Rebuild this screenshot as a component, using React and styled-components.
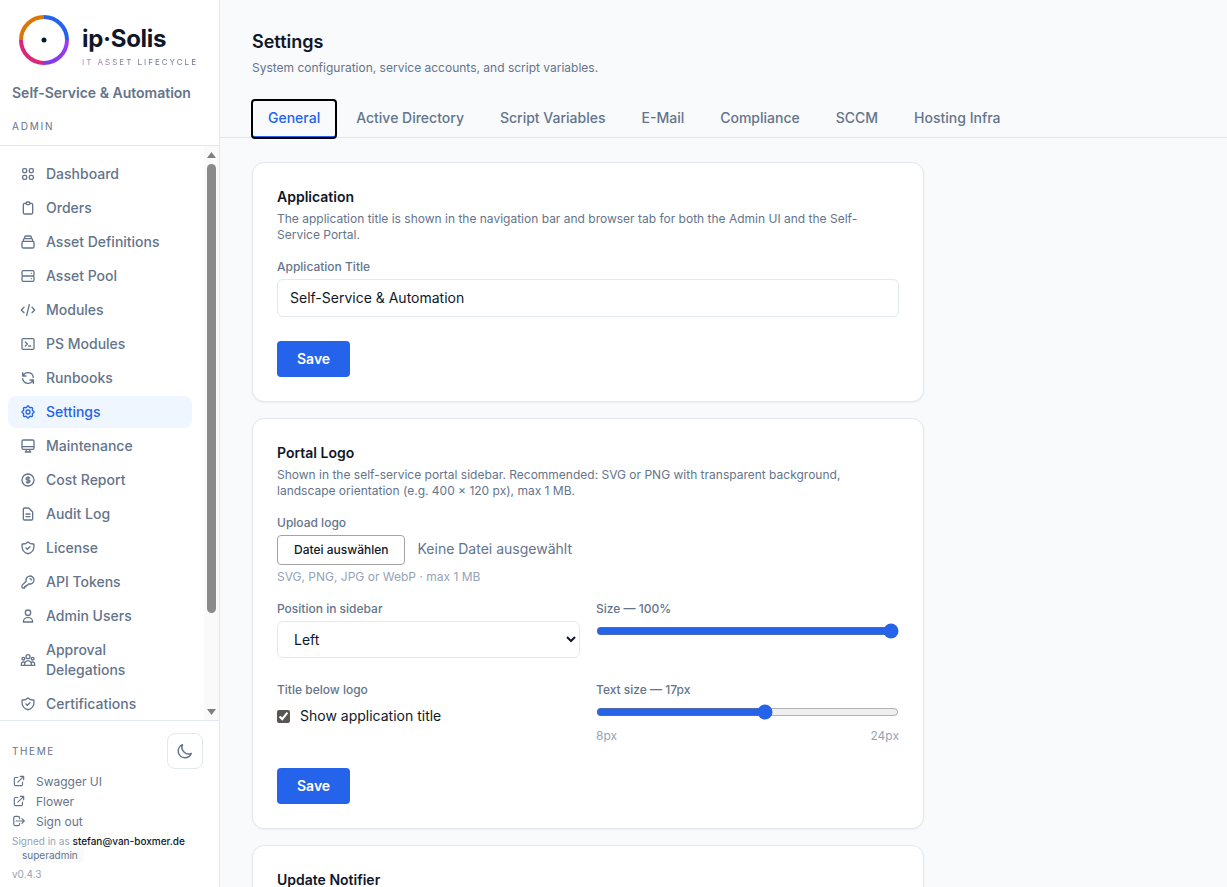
import React from 'react';
import styled, {createGlobalStyle} from 'styled-components';
import {
	HiOutlineViewGrid,
	HiOutlineClipboard,
	HiOutlineCollection,
	HiOutlineServer,
	HiOutlineCode,
	HiOutlineTerminal,
	HiOutlineRefresh,
	HiOutlineCog,
	HiOutlineDesktopComputer,
	HiOutlineCurrencyDollar,
	HiOutlineDocumentText,
	HiOutlineShieldCheck,
	HiOutlineKey,
	HiOutlineUser,
	HiOutlineUserGroup,
	HiOutlineMoon,
	HiOutlineExternalLink,
	HiOutlineLogout
} from 'react-icons/hi';

const navItems = [
	{label: 'Dashboard', icon: HiOutlineViewGrid},
	{label: 'Orders', icon: HiOutlineClipboard},
	{label: 'Asset Definitions', icon: HiOutlineCollection},
	{label: 'Asset Pool', icon: HiOutlineServer},
	{label: 'Modules', icon: HiOutlineCode},
	{label: 'PS Modules', icon: HiOutlineTerminal},
	{label: 'Runbooks', icon: HiOutlineRefresh},
	{label: 'Settings', icon: HiOutlineCog, active: true},
	{label: 'Maintenance', icon: HiOutlineDesktopComputer},
	{label: 'Cost Report', icon: HiOutlineCurrencyDollar},
	{label: 'Audit Log', icon: HiOutlineDocumentText},
	{label: 'License', icon: HiOutlineShieldCheck},
	{label: 'API Tokens', icon: HiOutlineKey},
	{label: 'Admin Users', icon: HiOutlineUser},
	{label: 'Approval Delegations', icon: HiOutlineUserGroup},
	{label: 'Certifications', icon: HiOutlineShieldCheck}
];

const tabs = ['General', 'Active Directory', 'Script Variables', 'E-Mail', 'Compliance', 'SCCM', 'Hosting Infra'];

const GlobalStyle = createGlobalStyle`
	* {
		box-sizing: border-box;
	}

	html, body, #root {
		height: 100%;
	}

	body {
		margin: 0;
		overflow: hidden;
		font-family: Inter, "Liberation Sans", sans-serif;
		background: #f8fafc;
		color: #0f172a;
	}
`;

const Logo = () => (
	<svg width="50" height="50" viewBox="0 0 50 50" fill="none">
		<defs>
			<linearGradient id="ringPurple" x1="48" y1="25" x2="25" y2="48" gradientUnits="userSpaceOnUse">
				<stop offset="0" stopColor="#a13cf0"/>
				<stop offset="1" stopColor="#7c3aed"/>
			</linearGradient>
		</defs>
		<path d="M2 25A23 23 0 0 1 25 2" stroke="#d97706" strokeWidth="4"/>
		<path d="M25 2A23 23 0 0 1 48 25" stroke="#2563eb" strokeWidth="4"/>
		<path d="M48 25A23 23 0 0 1 25 48" stroke="url(#ringPurple)" strokeWidth="4"/>
		<path d="M25 48A23 23 0 0 1 2 25" stroke="#db2777" strokeWidth="4"/>
		<circle cx="25" cy="25" r="2.5" fill="#0f172a"/>
	</svg>
);

const ArrowUp = () => (
	<svg width="9" height="6" viewBox="0 0 9 6"><path d="M4.5 0L9 6H0z" fill="#808080"/></svg>
);

const ArrowDown = () => (
	<svg width="9" height="6" viewBox="0 0 9 6"><path d="M4.5 6L9 0H0z" fill="#808080"/></svg>
);

const App = () => (
	<Shell>
		<GlobalStyle/>
		<Sidebar>
			<Brand>
				<BrandRow>
					<Logo/>
					<BrandText>
						<BrandName>ip·Solis</BrandName>
						<BrandTag>IT ASSET LIFECYCLE</BrandTag>
					</BrandText>
				</BrandRow>
				<AppTitle>Self-Service &amp; Automation</AppTitle>
				<AreaLabel>ADMIN</AreaLabel>
			</Brand>
			<NavArea>
				<Nav>
					{navItems.map(({label, icon: Icon, active}) => (
						<NavItem key={label} $active={active}>
							<Icon size={16}/>
							<span>{label}</span>
						</NavItem>
					))}
				</Nav>
				<Rail>
					<RailArrow><ArrowUp/></RailArrow>
					<RailThumb/>
					<RailArrow><ArrowDown/></RailArrow>
				</Rail>
			</NavArea>
			<SideFooter>
				<ThemeRow>
					<ThemeLabel>THEME</ThemeLabel>
					<ThemeButton><HiOutlineMoon size={18}/></ThemeButton>
				</ThemeRow>
				<FooterLink><HiOutlineExternalLink size={14}/>Swagger UI</FooterLink>
				<FooterLink><HiOutlineExternalLink size={14}/>Flower</FooterLink>
				<FooterLink><HiOutlineLogout size={14}/>Sign out</FooterLink>
				<SignedIn>Signed in as <strong>stefan@van-boxmer.de</strong></SignedIn>
				<RoleTag>superadmin</RoleTag>
				<Version>v0.4.3</Version>
			</SideFooter>
		</Sidebar>
		<Main>
			<Title>Settings</Title>
			<Subtitle>System configuration, service accounts, and script variables.</Subtitle>
			<TabBar>
				{tabs.map((tab, i) => <Tab key={tab} $active={i === 0}>{tab}</Tab>)}
			</TabBar>
			<Cards>
				<Card>
					<CardTitle>Application</CardTitle>
					<CardText>The application title is shown in the navigation bar and browser tab for both the Admin UI and the Self-Service Portal.</CardText>
					<Label>Application Title</Label>
					<TextInput defaultValue="Self-Service & Automation"/>
					<SaveButton>Save</SaveButton>
				</Card>
				<Card>
					<CardTitle>Portal Logo</CardTitle>
					<CardText>Shown in the self-service portal sidebar. Recommended: SVG or PNG with transparent background, landscape orientation (e.g. 400 × 120 px), max 1 MB.</CardText>
					<Label>Upload logo</Label>
					<FileRow>
						<FileButton>Datei auswählen</FileButton>
						<FileName>Keine Datei ausgewählt</FileName>
					</FileRow>
					<Hint>SVG, PNG, JPG or WebP · max 1 MB</Hint>
					<FieldGrid>
						<div>
							<Label>Position in sidebar</Label>
							<Select defaultValue="left">
								<option value="left">Left</option>
								<option value="center">Center</option>
							</Select>
						</div>
						<div>
							<Label>Size — 100%</Label>
							<Range min="0" max="100" defaultValue="100"/>
						</div>
						<div>
							<Label>Title below logo</Label>
							<CheckRow>
								<Check type="checkbox" defaultChecked/>
								Show application title
							</CheckRow>
						</div>
						<div>
							<Label>Text size — 17px</Label>
							<Range min="8" max="24" defaultValue="17"/>
							<RangeEnds><span>8px</span><span>24px</span></RangeEnds>
						</div>
					</FieldGrid>
					<SaveButton>Save</SaveButton>
				</Card>
				<NotifierCard>
					<CardTitle>Update Notifier</CardTitle>
				</NotifierCard>
			</Cards>
		</Main>
	</Shell>
);

export default App;

const Shell = styled.div`
	display: flex;
	height: 100vh;
	overflow: hidden;
`;

const Sidebar = styled.aside`
	display: flex;
	flex-direction: column;
	flex: none;
	width: 220px;
	height: 100%;
	background: #fff;
	border-right: 1px solid #e2e8f0;
`;

const Brand = styled.div`
	flex: none;
	height: 146px;
	padding: 15px 12px 0;
	border-bottom: 1px solid #e2e8f0;
`;

const BrandRow = styled.div`
	display: flex;
	align-items: flex-start;
	gap: 13px;
	padding-left: 7px;
`;

const BrandText = styled.div`
	display: flex;
	flex-direction: column;
	padding-top: 9px;
`;

const BrandName = styled.div`
	font-size: 24px;
	line-height: 30px;
	font-weight: 700;
	letter-spacing: -0.3px;
	color: #0f172a;
`;

const BrandTag = styled.div`
	margin-top: 3px;
	font-size: 8px;
	line-height: 10px;
	letter-spacing: 2px;
	white-space: nowrap;
	background: linear-gradient(90deg, #b07fa6, #64748b 60%);
	-webkit-background-clip: text;
	background-clip: text;
	color: transparent;
`;

const AppTitle = styled.div`
	margin-top: 16px;
	font-size: 14px;
	line-height: 20px;
	font-weight: 600;
	color: #64748b;
`;

const AreaLabel = styled.div`
	margin-top: 17px;
	font-size: 10px;
	line-height: 12px;
	letter-spacing: 1.8px;
	color: #64748b;
`;

const NavArea = styled.div`
	flex: 1;
	min-height: 0;
	display: flex;
`;

const Nav = styled.nav`
	flex: 1;
	min-width: 0;
	display: flex;
	flex-direction: column;
	gap: 2px;
	padding: 12px 12px 0 8px;
	overflow: hidden;
`;

const NavItem = styled.a`
	display: flex;
	flex: none;
	align-items: center;
	gap: 10px;
	min-height: 32px;
	padding: 6px 12px;
	border-radius: 8px;
	font-size: 14px;
	line-height: 20px;
	font-weight: 500;
	color: ${props => props.$active ? '#2563eb' : '#64748b'};
	background: ${props => props.$active ? '#eff6ff' : 'transparent'};

	svg {
		flex: none;
	}
`;

const Rail = styled.div`
	flex: none;
	display: flex;
	flex-direction: column;
	align-items: center;
	width: 15px;
	background: #fafafa;
`;

const RailArrow = styled.div`
	flex: none;
	display: flex;
	align-items: center;
	justify-content: center;
	height: 17px;
	width: 100%;
`;

const RailThumb = styled.div`
	flex: none;
	width: 9px;
	height: 449px;
	margin: 1px 0 auto;
	border-radius: 5px;
	background: #8a8a8a;
`;

const SideFooter = styled.div`
	flex: none;
	height: 167px;
	padding: 12px 12px 0;
	border-top: 1px solid #e2e8f0;
`;

const ThemeRow = styled.div`
	display: flex;
	align-items: center;
	justify-content: space-between;
	padding-right: 4px;
	margin-bottom: 2px;
`;

const ThemeLabel = styled.span`
	font-size: 10px;
	letter-spacing: 1.6px;
	color: #64748b;
`;

const ThemeButton = styled.span`
	display: flex;
	align-items: center;
	justify-content: center;
	width: 36px;
	height: 36px;
	border: 1px solid #e2e8f0;
	border-radius: 8px;
	background: #fff;
	color: #64748b;
`;

const FooterLink = styled.a`
	display: flex;
	align-items: center;
	gap: 10px;
	height: 20px;
	font-size: 12px;
	color: #64748b;
`;

const SignedIn = styled.div`
	margin-top: 3px;
	font-size: 10px;
	line-height: 14px;
	white-space: nowrap;
	color: #94a3b8;

	strong {
		font-weight: 500;
		color: #0f172a;
	}
`;

const RoleTag = styled.div`
	width: fit-content;
	margin: -1px 0 0 4px;
	padding: 0 6px;
	border-radius: 4px;
	background: #f8fafc;
	font-size: 10px;
	line-height: 16px;
	color: #64748b;
`;

const Version = styled.div`
	margin-top: 4px;
	font-size: 10px;
	line-height: 14px;
	color: #94a3b8;
`;

const Main = styled.main`
	flex: 1;
	min-width: 0;
	padding-top: 28px;
	overflow: hidden;
`;

const Title = styled.h1`
	margin: 0 0 0 32px;
	font-size: 18px;
	line-height: 28px;
	font-weight: 600;
	color: #0f172a;
`;

const Subtitle = styled.p`
	margin: 4px 0 0 32px;
	font-size: 12px;
	line-height: 16px;
	color: #64748b;
`;

const TabBar = styled.div`
	display: flex;
	gap: 4px;
	margin-top: 24px;
	padding-left: 32px;
	border-bottom: 1px solid #e2e8f0;
`;

const Tab = styled.div`
	padding: 8px 16px;
	height: 38px;
	margin-bottom: -1px;
	font-size: 14px;
	line-height: 20px;
	font-weight: 500;
	color: ${props => props.$active ? '#2563eb' : '#64748b'};
	border-bottom: 2px solid ${props => props.$active ? '#2563eb' : 'transparent'};
	${props => props.$active && 'outline: 2px solid #000; outline-offset: -1px; border-radius: 3px;'}
`;

const Cards = styled.div`
	display: flex;
	flex-direction: column;
	gap: 16px;
	width: 672px;
	margin: 24px 0 0 32px;
`;

const Card = styled.section`
	padding: 24px;
	background: #fff;
	border: 1px solid #e2e8f0;
	border-radius: 12px;
	box-shadow: 0 1px 2px rgba(15, 23, 42, 0.05);
`;

const NotifierCard = styled(Card)`
	min-height: 160px;
`;

const CardTitle = styled.h2`
	margin: 0;
	font-size: 14px;
	line-height: 20px;
	font-weight: 600;
	color: #0f172a;
`;

const CardText = styled.p`
	margin: 4px 0 0;
	font-size: 12px;
	line-height: 16px;
	color: #64748b;
`;

const Label = styled.label`
	display: block;
	margin: 0 0 4px;
	font-size: 12px;
	line-height: 16px;
	font-weight: 500;
	color: #64748b;

	${CardText} + & {
		margin-top: 16px;
	}
`;

const TextInput = styled.input`
	display: block;
	width: 100%;
	height: 38px;
	padding: 0 12px 2px;
	border: 1px solid #e2e8f0;
	border-radius: 6px;
	background: #fff;
	font: 400 14px Inter, sans-serif;
	color: #0f172a;
`;

const SaveButton = styled.button`
	display: block;
	height: 36px;
	margin-top: 24px;
	padding: 0 20px 2px;
	border: 0;
	border-radius: 4px;
	background: #2563eb;
	font: 600 14px Inter, sans-serif;
	color: #fff;
`;

const FileRow = styled.div`
	display: flex;
	align-items: center;
	gap: 12px;
`;

const FileButton = styled.button`
	height: 30px;
	padding: 0 16px 2px;
	border: 1px solid #a3a3a3;
	border-radius: 4px;
	background: #fff;
	font: 500 12px Inter, sans-serif;
	color: #0f172a;
`;

const FileName = styled.span`
	padding-bottom: 3px;
	font-size: 14px;
	color: #64748b;
`;

const Hint = styled.div`
	margin-top: 4px;
	font-size: 12px;
	line-height: 16px;
	color: #94a3b8;
`;

const FieldGrid = styled.div`
	display: grid;
	grid-template-columns: 1fr 1fr;
	gap: 24px 16px;
	margin-top: 16px;
`;

const Select = styled.select`
	display: block;
	width: 100%;
	height: 37px;
	padding: 0 12px;
	border: 1px solid #e2e8f0;
	border-radius: 6px;
	background: #fff;
	font: 400 14px Inter, sans-serif;
	color: #0f172a;
`;

const Range = styled.input.attrs({type: 'range'})`
	display: block;
	width: 100%;
	margin: 6px 0 0;
	accent-color: #2563eb;
`;

const RangeEnds = styled.div`
	display: flex;
	justify-content: space-between;
	margin-top: 8px;
	font-size: 12px;
	line-height: 16px;
	color: #94a3b8;
`;

const CheckRow = styled.label`
	display: flex;
	align-items: center;
	gap: 10px;
	height: 28px;
	padding-bottom: 2px;
	font-size: 14px;
	color: #0f172a;
`;

const Check = styled.input`
	width: 13px;
	height: 13px;
	margin: 2px 0 0;
	accent-color: #5a5654;
`;
